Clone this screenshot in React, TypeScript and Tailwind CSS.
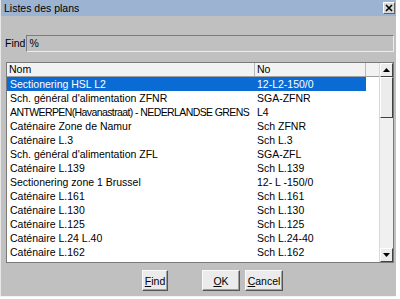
import React from 'react';

type Plan = { nom: string; no: string; tight?: boolean };

const plans: Plan[] = [
  { nom: 'Sectionering HSL L2', no: '12-L2-150/0' },
  { nom: "Sch. général d'alimentation ZFNR", no: 'SGA-ZFNR' },
  { nom: 'ANTWERPEN(Havanastraat) - NEDERLANDSE GRENS', no: 'L4', tight: true },
  { nom: 'Caténaire Zone de Namur', no: 'Sch ZFNR' },
  { nom: 'Caténaire L.3', no: 'Sch L.3' },
  { nom: "Sch. général d'alimentation ZFL", no: 'SGA-ZFL' },
  { nom: 'Caténaire L.139', no: 'Sch L.139' },
  { nom: 'Sectionering zone 1 Brussel', no: '12- L -150/0' },
  { nom: 'Caténaire L.161', no: 'Sch L.161' },
  { nom: 'Caténaire L.130', no: 'Sch L.130' },
  { nom: 'Caténaire L.125', no: 'Sch L.125' },
  { nom: 'Caténaire L.24 L.40', no: 'Sch L.24-40' },
  { nom: 'Caténaire L.162', no: 'Sch L.162' },
  { nom: 'CHARLEROI - Châtelet', no: 'SCH CH-1604' },
];

export default function App() {
  return (
    <div className="w-[400px] h-[299px] bg-white font-['Liberation_Sans',Arial,sans-serif] text-[10.5px] text-black overflow-hidden">
      <div className="w-[396px] h-[297px] bg-[#c0c0c0] flex flex-col border-l border-[#e8e8e8] border-b border-b-[#f4f4f4]">
        {/* title bar */}
        <div className="h-[16px] bg-[#9cb4d1] flex items-center justify-between pl-[3px] pr-[1px]">
          <span className="leading-none">Listes des plans</span>
          <button className="w-[12px] h-[12px] bg-[#d8d8d8] border border-t-white border-l-white border-r-[#606060] border-b-[#606060] flex items-center justify-center">
            <svg width="8" height="8" viewBox="0 0 8 8">
              <path d="M1 1 L7 7 M7 1 L1 7" stroke="#000" strokeWidth="1.6" />
            </svg>
          </button>
        </div>

        {/* find row */}
        <div className="mt-[19px] h-[17px] flex items-center pr-[2px]">
          <span className="ml-[4px] mr-[1px]">Find</span>
          <div className="flex-1 h-[17px] border border-t-[#7c7c7c] border-l-[#7c7c7c] border-r-[#ececec] border-b-[#ececec] flex items-center pl-[2px]">
            %
          </div>
        </div>

        {/* list */}
        <div className="mt-[10px] ml-[5px] mr-[2px] h-[201px] border border-[#7a7a7a] bg-white flex overflow-hidden">
          <div className="flex-1 flex flex-col overflow-hidden">
            <div className="h-[14px] shrink-0 flex bg-[#f2f2f2] border-b border-[#a0a0a0]">
              <div className="w-[248px] pl-[2px] border-r border-[#b8b8b8] leading-[13px]">Nom</div>
              <div className="w-[111px] pl-[2px] border-r border-[#b8b8b8] leading-[13px]">No</div>
              <div className="flex-1" />
            </div>
            {plans.map((p, i) => (
              <div key={i} className="h-[14px] shrink-0 flex">
                <div className={`w-[359px] flex leading-[14px] ${i === 0 ? 'bg-[#0b6bd5] text-white' : ''}`}>
                  <div className={`w-[248px] pl-[3px] whitespace-nowrap overflow-hidden ${p.tight ? 'tracking-[-0.6px]' : ''}`}>
                    {p.nom}
                  </div>
                  <div className="w-[111px] pl-[2px] whitespace-nowrap overflow-hidden">{p.no}</div>
                </div>
              </div>
            ))}
          </div>

          {/* scrollbar */}
          <div className="w-[14px] flex flex-col bg-[#f0f0f0] border-l border-[#d8d8d8]">
            <div className="h-[14px] shrink-0 bg-[#ececec] border border-t-white border-l-white border-r-[#404040] border-b-[#404040] flex items-center justify-center">
              <svg width="7" height="4" viewBox="0 0 7 4"><path d="M3.5 0 L7 4 L0 4 Z" fill="#000" /></svg>
            </div>
            <div className="h-[41px] shrink-0 bg-[#ececec] border border-t-white border-l-white border-r-[#404040] border-b-[#404040]" />
            <div className="flex-1" />
            <div className="h-[14px] shrink-0 bg-[#ececec] border border-t-white border-l-white border-r-[#404040] border-b-[#404040] flex items-center justify-center">
              <svg width="7" height="4" viewBox="0 0 7 4"><path d="M0 0 L7 0 L3.5 4 Z" fill="#000" /></svg>
            </div>
          </div>
        </div>

        {/* buttons */}
        <div className="mt-[7px] flex">
          <Btn className="ml-[141px] w-[26px]" mn="F" rest="ind" />
          <Btn className="ml-[34px] w-[38px]" mn="O" rest="K" />
          <Btn className="ml-[5px] w-[38px]" mn="C" rest="ancel" />
        </div>
      </div>
    </div>
  );
}

function Btn({ className, mn, rest }: { className: string; mn: string; rest: string }) {
  return (
    <button
      className={`${className} h-[21px] px-0 bg-[#ebebeb] border border-t-[#fafafa] border-l-[#fafafa] border-r-[#555555] border-b-[#555555] shadow-[inset_-1px_-1px_0_#a0a0a0] flex items-center justify-center leading-[12px] whitespace-nowrap`}
    >
      <span>
        <span className="underline">{mn}</span>
        {rest}
      </span>
    </button>
  );
}
